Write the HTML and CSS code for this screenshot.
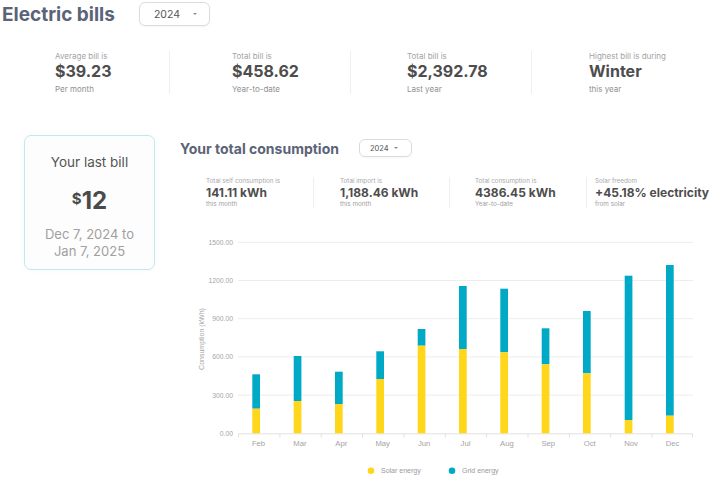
FILE: index.html
```html
<!DOCTYPE html>
<html lang="en">
<head>
<meta charset="utf-8">
<title>Electric bills</title>
<link rel="stylesheet" href="styles.css">
</head>
<body>
<header class="topbar">
  <h1 class="page-title">Electric bills</h1>
  <div class="select select-lg">2024<span class="caret"></span></div>
</header>

<section class="bill-stats">
  <div class="stat">
    <div class="stat-label">Average bill is</div>
    <div class="stat-value">$39.23</div>
    <div class="stat-sub">Per month</div>
  </div>
  <div class="stat">
    <div class="stat-label">Total bill is</div>
    <div class="stat-value">$458.62</div>
    <div class="stat-sub">Year-to-date</div>
  </div>
  <div class="stat">
    <div class="stat-label">Total bill is</div>
    <div class="stat-value">$2,392.78</div>
    <div class="stat-sub">Last year</div>
  </div>
  <div class="stat">
    <div class="stat-label">Highest bill is during</div>
    <div class="stat-value">Winter</div>
    <div class="stat-sub">this year</div>
  </div>
</section>

<main class="main">
  <aside class="last-bill">
    <div class="lb-title">Your last bill</div>
    <div class="lb-amount"><span class="lb-cur">$</span>12</div>
    <div class="lb-dates">Dec 7, 2024 to<br>Jan 7, 2025</div>
  </aside>

  <section class="consumption">
    <div class="cons-head">
      <h2 class="cons-title">Your total consumption</h2>
      <div class="select select-sm">2024<span class="caret caret-sm"></span></div>
    </div>

    <div class="cons-stats">
      <div class="cstat">
        <div class="cstat-label">Total self consumption is</div>
        <div class="cstat-value">141.11 kWh</div>
        <div class="cstat-sub">this month</div>
      </div>
      <div class="cstat">
        <div class="cstat-label">Total import is</div>
        <div class="cstat-value">1,188.46 kWh</div>
        <div class="cstat-sub">this month</div>
      </div>
      <div class="cstat">
        <div class="cstat-label">Total consumption is</div>
        <div class="cstat-value">4386.45 kWh</div>
        <div class="cstat-sub">Year-to-date</div>
      </div>
      <div class="cstat">
        <div class="cstat-label">Solar freedom</div>
        <div class="cstat-value">+45.18% electricity</div>
        <div class="cstat-sub">from solar</div>
      </div>
    </div>

    <svg class="chart" width="550" height="274" viewBox="170 208 550 274" xmlns="http://www.w3.org/2000/svg">
      <g class="grid" stroke="#ededed" stroke-width="1">
        <line x1="238" y1="242.3" x2="693" y2="242.3"/>
        <line x1="238" y1="280.5" x2="693" y2="280.5"/>
        <line x1="238" y1="318.7" x2="693" y2="318.7"/>
        <line x1="238" y1="356.9" x2="693" y2="356.9"/>
        <line x1="238" y1="395.1" x2="693" y2="395.1"/>
      </g>
      <line x1="238" y1="433.8" x2="693" y2="433.8" stroke="#e2e2e2" stroke-width="1"/>
      <g stroke="#e2e2e2" stroke-width="1">
        <line x1="238.5" y1="433.8" x2="238.5" y2="437.5"/>
        <line x1="279.9" y1="433.8" x2="279.9" y2="437.5"/>
        <line x1="321.2" y1="433.8" x2="321.2" y2="437.5"/>
        <line x1="362.6" y1="433.8" x2="362.6" y2="437.5"/>
        <line x1="403.9" y1="433.8" x2="403.9" y2="437.5"/>
        <line x1="445.3" y1="433.8" x2="445.3" y2="437.5"/>
        <line x1="486.7" y1="433.8" x2="486.7" y2="437.5"/>
        <line x1="528.0" y1="433.8" x2="528.0" y2="437.5"/>
        <line x1="569.4" y1="433.8" x2="569.4" y2="437.5"/>
        <line x1="610.7" y1="433.8" x2="610.7" y2="437.5"/>
        <line x1="652.1" y1="433.8" x2="652.1" y2="437.5"/>
        <line x1="692.5" y1="433.8" x2="692.5" y2="437.5"/>
      </g>
      <g class="ytick" text-anchor="end">
        <text x="233" y="242.3">1500.00</text>
        <text x="233" y="280.5">1200.00</text>
        <text x="233" y="318.7">900.00</text>
        <text x="233" y="356.9">600.00</text>
        <text x="233" y="395.1">300.00</text>
        <text x="233" y="433.3">0.00</text>
      </g>
      <text class="ytitle" transform="translate(204 339) rotate(-90)" text-anchor="middle">Consumption (kWh)</text>

      <g class="bars">
        <rect class="grid-bar" x="252.3" y="374.3" width="7.7" height="34.4"/>
        <rect class="solar-bar" x="252.3" y="408.7" width="7.7" height="24.6"/>
        <rect class="grid-bar" x="293.7" y="356" width="7.7" height="45"/>
        <rect class="solar-bar" x="293.7" y="401" width="7.7" height="32.3"/>
        <rect class="grid-bar" x="335" y="371.7" width="7.7" height="32.3"/>
        <rect class="solar-bar" x="335" y="404" width="7.7" height="29.3"/>
        <rect class="grid-bar" x="376.3" y="351.3" width="7.7" height="27.7"/>
        <rect class="solar-bar" x="376.3" y="379" width="7.7" height="54.3"/>
        <rect class="grid-bar" x="417.7" y="329" width="7.7" height="16.7"/>
        <rect class="solar-bar" x="417.7" y="345.7" width="7.7" height="87.6"/>
        <rect class="grid-bar" x="459" y="286" width="7.7" height="63"/>
        <rect class="solar-bar" x="459" y="349" width="7.7" height="84.3"/>
        <rect class="grid-bar" x="500.3" y="288.7" width="7.7" height="63.6"/>
        <rect class="solar-bar" x="500.3" y="352.3" width="7.7" height="81"/>
        <rect class="grid-bar" x="541.7" y="328.3" width="7.7" height="36"/>
        <rect class="solar-bar" x="541.7" y="364.3" width="7.7" height="69"/>
        <rect class="grid-bar" x="583" y="311" width="7.7" height="62.3"/>
        <rect class="solar-bar" x="583" y="373.3" width="7.7" height="60"/>
        <rect class="grid-bar" x="624.7" y="275.7" width="7.7" height="144.3"/>
        <rect class="solar-bar" x="624.7" y="420" width="7.7" height="13.3"/>
        <rect class="grid-bar" x="666" y="265" width="7.7" height="150.7"/>
        <rect class="solar-bar" x="666" y="415.7" width="7.7" height="17.6"/>
      </g>

      <g class="xtick" text-anchor="middle">
        <text x="258.5" y="443.5">Feb</text>
        <text x="299.9" y="443.5">Mar</text>
        <text x="341.3" y="443.5">Apr</text>
        <text x="382.7" y="443.5">May</text>
        <text x="424.1" y="443.5">Jun</text>
        <text x="465.5" y="443.5">Jul</text>
        <text x="506.9" y="443.5">Aug</text>
        <text x="548.3" y="443.5">Sep</text>
        <text x="589.7" y="443.5">Oct</text>
        <text x="631.1" y="443.5">Nov</text>
        <text x="672.5" y="443.5">Dec</text>
      </g>

      <g class="legend">
        <circle cx="371" cy="470.7" r="3.3" fill="#ffd61a"/>
        <text x="381" y="470.7">Solar energy</text>
        <circle cx="452" cy="470.7" r="3.3" fill="#00a9c6"/>
        <text x="462" y="470.7">Grid energy</text>
      </g>
    </svg>
  </section>
</main>
</body>
</html>
```

FILE: styles.css
```css
* { box-sizing: border-box; }

html, body {
  margin: 0;
  padding: 0;
  background: #ffffff;
  width: 720px;
  height: 482px;
  overflow: hidden;
  font-family: Inter, "Noto Sans", "Liberation Sans", sans-serif;
}

.topbar {
  display: flex;
  align-items: center;
  height: 28px;
  padding-left: 2px;
}

.page-title {
  margin: 0;
  font-size: 19px;
  line-height: 23px;
  font-weight: 700;
  color: #5a6377;
  letter-spacing: 0;
}

.select {
  display: flex;
  align-items: center;
  border: 1px solid #dcdcdc;
  border-radius: 6px;
  color: #555555;
  background: #ffffff;
  box-shadow: 0 1px 2px rgba(0,0,0,0.04);
}

.select-lg {
  margin-left: 24px;
  width: 71px;
  height: 24px;
  padding-left: 14px;
  font-size: 10.5px;
}

.select-sm {
  margin-left: 20px;
  width: 53px;
  height: 18px;
  padding-left: 10px;
  font-size: 7.5px;
}

.caret {
  width: 0;
  height: 0;
  margin-left: 13px;
  border-left: 2.5px solid transparent;
  border-right: 2.5px solid transparent;
  border-top: 2.5px solid #8a8a8a;
}

.caret-sm {
  margin-left: 5px;
  border-left-width: 2px;
  border-right-width: 2px;
  border-top-width: 2px;
}

/* top bill stats */
.bill-stats {
  display: grid;
  grid-template-columns: 169px 181px 181px 1fr;
  margin-top: 23px;
  height: 43px;
}

.stat {
  border-left: 1px solid #efefef;
}
.stat:nth-child(1) { border-left: none; padding-left: 55px; }
.stat:nth-child(2) { padding-left: 62px; }
.stat:nth-child(3) { padding-left: 56px; }
.stat:nth-child(4) { padding-left: 57px; }

.stat-label {
  font-size: 8px;
  line-height: 10px;
  color: #a3a3a3;
}

.stat-value {
  font-size: 16px;
  line-height: 20px;
  font-weight: 700;
  color: #4d4d4d;
}

.stat-sub {
  margin-top: 3px;
  font-size: 8px;
  line-height: 10px;
  color: #909090;
}

/* main */
.main {
  display: flex;
  align-items: flex-start;
  margin-top: 41px;
  padding-left: 24px;
}

.last-bill {
  width: 131px;
  height: 135px;
  flex: none;
  border: 1px solid #bfe9f2;
  border-radius: 7px;
  background: #fdfdfd;
  padding-top: 18px;
  text-align: center;
  box-shadow: 0 0 6px rgba(0,0,0,0.03);
}

.lb-title {
  font-size: 13.5px;
  line-height: 17px;
  color: #555555;
}

.lb-amount {
  margin-top: 12.5px;
  font-size: 24px;
  line-height: 29px;
  font-weight: 700;
  color: #4a4a4a;
}

.lb-cur {
  font-size: 15px;
  vertical-align: 5px;
}

.lb-dates {
  margin-top: 11px;
  font-size: 13px;
  line-height: 17.5px;
  color: #a0a0a0;
}

.consumption {
  margin-left: 15px;
  width: 550px;
  padding-top: 4px;
}

.cons-head {
  display: flex;
  align-items: center;
  height: 18px;
  padding-left: 10px;
}

.cons-title {
  margin: 0;
  font-size: 14px;
  line-height: 17px;
  font-weight: 700;
  color: #5a6377;
}

.cons-stats {
  display: grid;
  grid-template-columns: 143px 136px 137px 1fr;
  margin-top: 20px;
  height: 31px;
}

.cstat { border-left: 1px solid #efefef; }
.cstat:nth-child(1) { border-left: none; padding-left: 36px; }
.cstat:nth-child(2) { padding-left: 26px; }
.cstat:nth-child(3) { padding-left: 25px; }
.cstat:nth-child(4) { padding-left: 8px; }

.cstat-label {
  font-size: 6.3px;
  line-height: 8px;
  color: #a8a8a8;
  white-space: nowrap;
}

.cstat-value {
  font-size: 12px;
  line-height: 15px;
  font-weight: 700;
  color: #4d4d4d;
  white-space: nowrap;
}

.cstat-sub {
  font-size: 6.3px;
  line-height: 8px;
  color: #a0a0a0;
}

.chart {
  display: block;
  font-family: "Liberation Sans", Arial, sans-serif;
}

.ytick text {
  font-size: 6.8px;
  fill: #a6a6a6;
  dominant-baseline: central;
}

.ytitle {
  font-size: 7px;
  fill: #a6a6a6;
}

.xtick text {
  font-size: 7.7px;
  fill: #a3a3a3;
  dominant-baseline: central;
}

.solar-bar { fill: #ffd61a; }
.grid-bar { fill: #00a9c6; }

.legend text {
  font-size: 7px;
  fill: #9a9a9a;
  dominant-baseline: central;
}
```
